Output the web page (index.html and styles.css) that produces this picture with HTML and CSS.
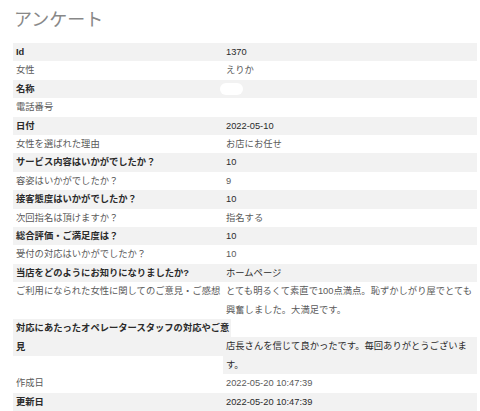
FILE: index.html
```html
<!DOCTYPE html>
<html lang="ja">
<head>
<meta charset="utf-8">
<title>アンケート</title>
<link rel="stylesheet" href="styles.css">
</head>
<body>
<div class="page">
  <h1 class="title">アンケート</h1>
  <div class="survey">
    <div class="cell label shade">Id</div><div class="cell value shade">1370</div>
    <div class="cell label">女性</div><div class="cell value">えりか</div>
    <div class="cell label shade">名称</div><div class="cell value shade"><span class="blur"></span></div>
    <div class="cell label">電話番号</div><div class="cell value"></div>
    <div class="cell label shade">日付</div><div class="cell value shade">2022-05-10</div>
    <div class="cell label">女性を選ばれた理由</div><div class="cell value">お店にお任せ</div>
    <div class="cell label shade">サービス内容はいかがでしたか？</div><div class="cell value shade">10</div>
    <div class="cell label">容姿はいかがでしたか？</div><div class="cell value">9</div>
    <div class="cell label shade">接客態度はいかがでしたか？</div><div class="cell value shade">10</div>
    <div class="cell label">次回指名は頂けますか？</div><div class="cell value">指名する</div>
    <div class="cell label shade">総合評価・ご満足度は？</div><div class="cell value shade">10</div>
    <div class="cell label">受付の対応はいかがでしたか？</div><div class="cell value">10</div>
    <div class="cell label shade">当店をどのようにお知りになりましたか?</div><div class="cell value shade">ホームページ</div>
    <div class="cell label">ご利用になられた女性に関してのご意見・ご感想</div><div class="cell value">とても明るくて素直で100点満点。恥ずかしがり屋でとても興奮しました。大満足です。</div>
    <div class="cell label shade span2">対応にあたったオペレータースタッフの対応やご意見</div><div class="cell value"></div>
    <div class="cell value shade span2">店長さんを信じて良かったです。毎回ありがとうございます。</div><div class="cell label"></div>
    <div class="cell label">作成日</div><div class="cell value">2022-05-20 10:47:39</div>
    <div class="cell label shade">更新日</div><div class="cell value shade">2022-05-20 10:47:39</div>
  </div>
</div>
</body>
</html>
```
FILE: styles.css
```css
html, body {
  margin: 0;
  padding: 0;
  background: #ffffff;
}
.page {
  padding: 8px 3px 0 13px;
  font-family: "Liberation Sans", "Noto Sans CJK JP", sans-serif;
}
.title {
  margin: 0 0 11px 1px;
  font-size: 18px;
  line-height: 24px;
  font-weight: 400;
  color: #888888;
}
.survey {
  display: grid;
  grid-template-columns: 210px 1fr;
  grid-auto-rows: minmax(18.4px, auto);
  font-size: 9.3px;
  line-height: 18.4px;
  color: #5a5a5a;
}
.cell {
  padding: 0 3px;
  min-height: 18.4px;
}
.label {
  margin-right: -8px;
  padding-right: 0;
}
.value {
  padding-right: 4px;
}
.shade {
  background: #f2f2f2;
  color: #2a2a2a;
}
.label.shade {
  font-weight: 700;
}
.span2 {
  grid-row: span 2;
}
.blur {
  display: inline-block;
  width: 23px;
  height: 12px;
  margin-left: -6px;
  vertical-align: middle;
  border-radius: 6px;
  background: #ffffff;
}
```
